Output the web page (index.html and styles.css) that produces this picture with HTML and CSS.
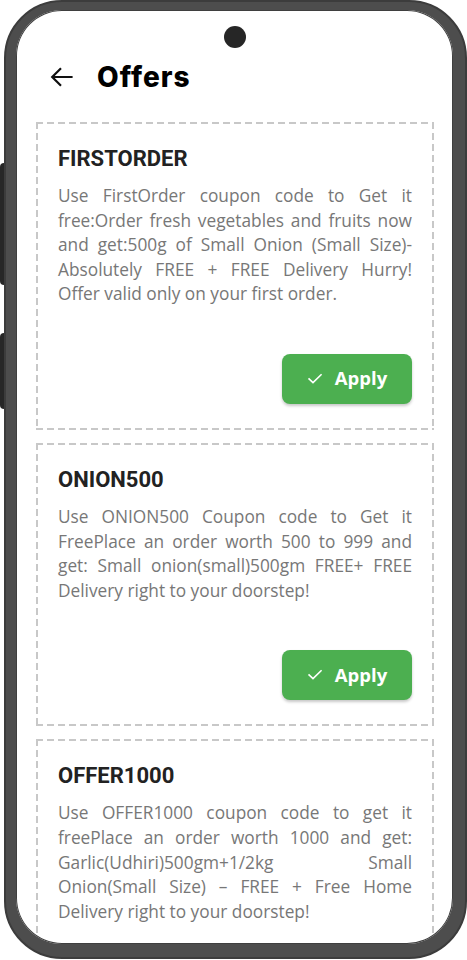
FILE: index.html
```html
<!DOCTYPE html>
<html lang="en">
<head>
<meta charset="utf-8">
<title>Offers</title>
<link rel="stylesheet" href="styles.css">
</head>
<body>
<div class="device">
  <span class="side-key side-key--long"></span>
  <span class="side-key side-key--short"></span>
  <div class="phone">
    <div class="screen">
      <div class="camera"></div>
      <header class="topbar">
        <svg class="back" viewBox="0 0 24 24" width="24" height="24" aria-hidden="true">
          <path d="M2.2 12H22.6M11 3.2L2.2 12L11 20.8" fill="none" stroke="#111" stroke-width="2.2" stroke-linecap="butt" stroke-linejoin="miter"/>
        </svg>
        <h1 class="title">Offers</h1>
      </header>
      <main class="list">
        <section class="card">
          <h2 class="code">FIRSTORDER</h2>
          <p class="desc">Use FirstOrder coupon code to Get it free:Order fresh vegetables and fruits now and get:500g of Small Onion (Small Size)- Absolutely FREE + FREE Delivery Hurry! Offer valid only on your first order.</p>
          <div class="actions">
            <button class="apply"><svg viewBox="0 0 16 16" width="16" height="16" aria-hidden="true"><path d="M1.5 8.3L6 12.6L14.6 4.2" fill="none" stroke="#fff" stroke-width="1.6"/></svg><span>Apply</span></button>
          </div>
        </section>
        <section class="card">
          <h2 class="code">ONION500</h2>
          <p class="desc">Use ONION500 Coupon code to Get it FreePlace an order worth 500 to 999 and get: Small onion(small)500gm FREE+ FREE Delivery right to your doorstep!</p>
          <div class="actions">
            <button class="apply"><svg viewBox="0 0 16 16" width="16" height="16" aria-hidden="true"><path d="M1.5 8.3L6 12.6L14.6 4.2" fill="none" stroke="#fff" stroke-width="1.6"/></svg><span>Apply</span></button>
          </div>
        </section>
        <section class="card">
          <h2 class="code">OFFER1000</h2>
          <p class="desc">Use OFFER1000 coupon code to get it freePlace an order worth 1000 and get: Garlic(Udhiri)500gm+1/2kg Small Onion(Small Size) – FREE + Free Home Delivery right to your doorstep!</p>
        </section>
      </main>
    </div>
  </div>
</div>
</body>
</html>
```
FILE: styles.css
```css
html, body {
  margin: 0;
  padding: 0;
  background: #fff;
  overflow: hidden;
}

.device {
  position: relative;
  width: 467px;
  height: 960px;
  padding-left: 4px;
  box-sizing: border-box;
}

.side-key {
  position: absolute;
  left: 0;
  width: 6px;
  background: #272727;
  border-radius: 4px 0 0 4px;
}
.side-key--long { top: 163px; height: 122px; }
.side-key--short { top: 333px; height: 76px; }

.phone {
  position: relative;
  width: 463px;
  height: 959px;
  box-sizing: border-box;
  background: #4d4d4d;
  border: 2px solid #3c3c3c;
  border-radius: 58px;
  padding: 8px 12px 13px 10px;
}

.screen {
  height: 100%;
  background: #fff;
  border-radius: 46px;
  overflow: hidden;
  box-shadow: inset 0 0 0 1px #3f3f3f;
  display: flex;
  flex-direction: column;
  padding: 16px 19px 0 20px;
  box-sizing: border-box;
}

.camera {
  align-self: center;
  width: 22px;
  height: 22px;
  border-radius: 50%;
  background: #262626;
  flex: none;
}

.topbar {
  display: flex;
  align-items: center;
  gap: 23px;
  margin-top: 13px;
  padding-left: 14px;
  height: 32px;
  flex: none;
}

.back { flex: none; }

.title {
  margin: 0;
  font-family: Inter, "Noto Sans", sans-serif;
  font-weight: 800;
  font-size: 28px;
  line-height: 32px;
  letter-spacing: 1px;
  color: #000;
}

.list {
  margin-top: 29px;
  display: flex;
  flex-direction: column;
  gap: 13px;
}

.card {
  flex: none;
  padding: 24px 22px 26px 22px;
  background:
    repeating-linear-gradient(90deg, #c8c8c8 0 7px, transparent 7px 11px) left top / 100% 2px no-repeat,
    repeating-linear-gradient(90deg, #c8c8c8 0 7px, transparent 7px 11px) left bottom / 100% 2px no-repeat,
    repeating-linear-gradient(180deg, #c8c8c8 0 7px, transparent 7px 11px) left top / 2px 100% no-repeat,
    repeating-linear-gradient(180deg, #c8c8c8 0 7px, transparent 7px 11px) right top / 2px 100% no-repeat;
}

.code {
  margin: 0;
  font-family: Roboto, "Noto Sans", sans-serif;
  font-weight: 700;
  font-size: 22px;
  line-height: 26px;
  color: #222;
}

.desc {
  margin: 12px 0 0;
  font-family: "Open Sans", "Noto Sans", sans-serif;
  font-size: 17.3px;
  line-height: 24.6px;
  color: #777;
  text-align: justify;
}

.actions {
  display: flex;
  justify-content: flex-end;
  margin-top: 47px;
}

.apply {
  display: flex;
  align-items: center;
  justify-content: center;
  gap: 12px;
  width: 130px;
  height: 50px;
  border: 0;
  border-radius: 8px;
  background: #4caf50;
  color: #fff;
  font-family: "Open Sans", "Noto Sans", sans-serif;
  font-weight: 700;
  font-size: 18.5px;
  box-shadow: 0 2px 3px rgba(0, 0, 0, 0.22);
  padding: 0 0 2px;
}

.apply svg { flex: none; }
```
